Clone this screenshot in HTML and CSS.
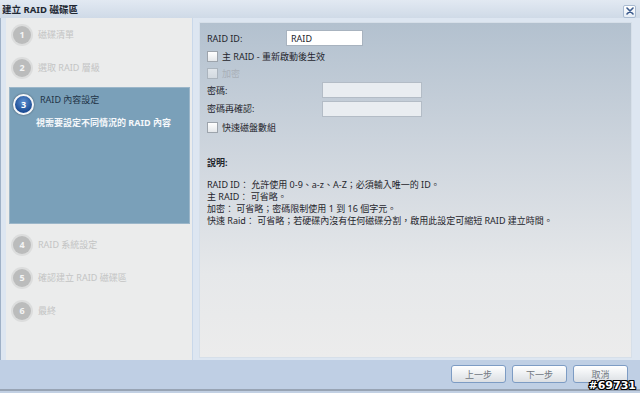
FILE: index.html
```html
<!DOCTYPE html>
<html lang="zh-Hant">
<head>
  <meta charset="UTF-8" />
  <title>建立 RAID 磁碟區</title>
  <link rel="stylesheet" href="styles.css">
</head>
<body>
  <div class="window">
    <div class="titlebar">
      <span class="title">建立 RAID 磁碟區</span>
      <span class="close">
        <svg width="8" height="8" viewBox="0 0 8 8"><path d="M1 1 L7 7 M7 1 L1 7" stroke="#3b5a8c" stroke-width="1.6" stroke-linecap="round"/></svg>
      </span>
    </div>

    <div class="main">
      <div class="steps">
        <div class="step"><span class="num">1</span>磁碟清單</div>
        <div class="step"><span class="num">2</span>選取 RAID 層級</div>
        <div class="step-active">
          <div class="step-head"><span class="num num-on">3</span>RAID 內容設定</div>
          <p class="step-desc">視需要設定不同情況的 RAID 內容</p>
        </div>
        <div class="step"><span class="num">4</span>RAID 系統設定</div>
        <div class="step"><span class="num">5</span>確認建立 RAID 磁碟區</div>
        <div class="step"><span class="num">6</span>最終</div>
      </div>

      <div class="content">
        <div class="row row-id">
          <label class="label">RAID ID:</label>
          <input class="field field-id" type="text" value="RAID">
        </div>
        <div class="row row-check">
          <span class="box"></span>主 RAID - 重新啟動後生效
        </div>
        <div class="row row-check row-off">
          <span class="box"></span>加密
        </div>
        <div class="row row-pw">
          <label class="label label-pw">密碼:</label>
          <input class="field field-pw" type="text">
        </div>
        <div class="row row-pw2">
          <label class="label label-pw">密碼再確認:</label>
          <input class="field field-pw" type="text">
        </div>
        <div class="row row-check">
          <span class="box"></span>快速磁盤數組
        </div>

        <div class="notes">
          <p class="notes-title">說明:</p>
          <p>RAID ID： 允許使用 0-9、a-z、A-Z；必須輸入唯一的 ID。</p>
          <p>主 RAID： 可省略。</p>
          <p>加密： 可省略；密碼限制使用 1 到 16 個字元。</p>
          <p>快速 Raid： 可省略；若硬碟內沒有任何磁碟分割，啟用此設定可縮短 RAID 建立時間。</p>
        </div>
      </div>
    </div>

    <div class="footer">
      <button class="btn">上一步</button>
      <button class="btn">下一步</button>
      <button class="btn">取消</button>
    </div>

    <div class="stamp">#69731</div>
  </div>
</body>
</html>
```

FILE: styles.css
```css
body {
  margin: 0;
  font-family: "Noto Sans", "Noto Sans CJK TC", sans-serif;
  font-size: 9px;
  color: #1f252c;
  background: #c2d0e3;
}
.window {
  position: relative;
  width: 640px;
  height: 393px;
  display: flex;
  flex-direction: column;
  overflow: hidden;
  background: #c2d0e3;
}
.titlebar {
  height: 18px;
  flex: none;
  display: flex;
  align-items: center;
  justify-content: space-between;
  padding: 0 4px 0 2px;
  background: linear-gradient(#e2e9f2, #cfdae7);
}
.title {
  font-size: 9.5px;
  font-weight: bold;
  color: #1f2833;
  line-height: 18px;
  padding-top: 1px;
}
.close {
  width: 11px;
  height: 11px;
  margin-top: 4px;
  border: 1px solid #a9bbd1;
  border-radius: 2px;
  background: linear-gradient(#ffffff, #e6edf5);
  display: flex;
  align-items: center;
  justify-content: center;
}
.main {
  height: 342px;
  flex: none;
  display: flex;
  padding-left: 5px;
  border-left: 1px solid #9fb1c7;
  background: #dde6f1;
}
.steps {
  width: 187px;
  flex: none;
  background: #ebecec;
  border-right: 1px solid #c9d8ea;
  box-sizing: border-box;
  padding: 0 2px 0 0;
}
.step {
  height: 33px;
  display: flex;
  align-items: center;
  padding-left: 7px;
  color: #c3c4c4;
}
.num {
  width: 18px;
  height: 18px;
  border-radius: 50%;
  background: #bbbcbc;
  box-shadow: 0 0 0 2px #dcdddd;
  color: #f4f4f4;
  font-weight: bold;
  font-size: 9px;
  display: flex;
  align-items: center;
  justify-content: center;
  margin-right: 7px;
  flex: none;
}
.step-active {
  height: 137px;
  margin: 3px 0 4px 3px;
  background: #7aa0b9;
  border: 1px solid #9bb6c9;
  box-sizing: border-box;
}
.step-head {
  display: flex;
  align-items: flex-start;
  padding: 6px 0 0 3px;
  color: #1f3447;
  line-height: 12px;
}
.num-on {
  width: 17px;
  height: 17px;
  margin-top: 0;
  margin-right: 6px;
  background: radial-gradient(circle at 50% 35%, #5d91d2, #1d4d95 70%);
  border: 2px solid #f4f6f8;
  box-shadow: 0 0 2px #3b4a5a;
  color: #ffffff;
}
.step-desc {
  margin: 2px 0 0 26px;
  color: #f4f7fa;
  font-weight: bold;
  line-height: 12px;
}
.content {
  width: 433px;
  flex: none;
  margin: 4px 0 2px 6px;
  box-sizing: border-box;
  padding: 6px 8px 0 7px;
  border: 1px solid #d6dfe9;
  background: linear-gradient(#b3c1cf, #cfd6de 40%, #e6e8ea 75%, #ececec);
}
.row {
  display: flex;
  align-items: center;
  height: 18px;
}
.row-off {
  height: 16px;
  color: #a9b0b8;
}
.row-off .box {
  opacity: 0.55;
}
.row-pw2 {
  height: 19px;
}
.label {
  width: 79px;
  flex: none;
}
.label-pw {
  width: 115px;
}
.field {
  height: 16px;
  box-sizing: border-box;
  border: 1px solid #a8b3bf;
  padding: 0 4px;
  font: inherit;
  color: #1c232b;
  outline: none;
}
.field-id {
  width: 77px;
  background: #ffffff;
}
.field-pw {
  width: 100px;
  background: #e9edf1;
  border-color: #b3bcc6;
}
.box {
  width: 9px;
  height: 9px;
  border: 1px solid #9da4ac;
  background: linear-gradient(#ffffff, #e4e7ea);
  margin-right: 4px;
  flex: none;
}
.notes {
  margin-top: 21px;
}
.notes p {
  margin: 0;
  line-height: 12px;
}
.notes .notes-title {
  font-weight: bold;
  margin-bottom: 10px;
}
.footer {
  height: 31px;
  flex: none;
  display: flex;
  justify-content: flex-end;
  align-items: flex-start;
  gap: 6px;
  padding: 5px 12px 0 0;
  box-sizing: border-box;
  background: #bfcfe4;
  border-bottom: 2px solid #98a4b4;
}
.btn {
  width: 55px;
  height: 18px;
  border: 1px solid #7d9cc4;
  border-radius: 3px;
  background: linear-gradient(#ffffff, #e9ecef 60%, #dcdfe3);
  font-family: "Liberation Serif", "Noto Sans CJK TC", serif;
  font-size: 9px;
  color: #707780;
  padding: 0;
}
.stamp {
  position: absolute;
  right: 4px;
  bottom: 1px;
  font-family: "DejaVu Sans", sans-serif;
  font-weight: bold;
  font-size: 11px;
  color: #ffffff;
  text-shadow: 1px 0 0 #000, -1px 0 0 #000, 0 1px 0 #000, 0 -1px 0 #000, 1px 1px 0 #000, -1px -1px 0 #000, 1px -1px 0 #000, -1px 1px 0 #000;
}
```
